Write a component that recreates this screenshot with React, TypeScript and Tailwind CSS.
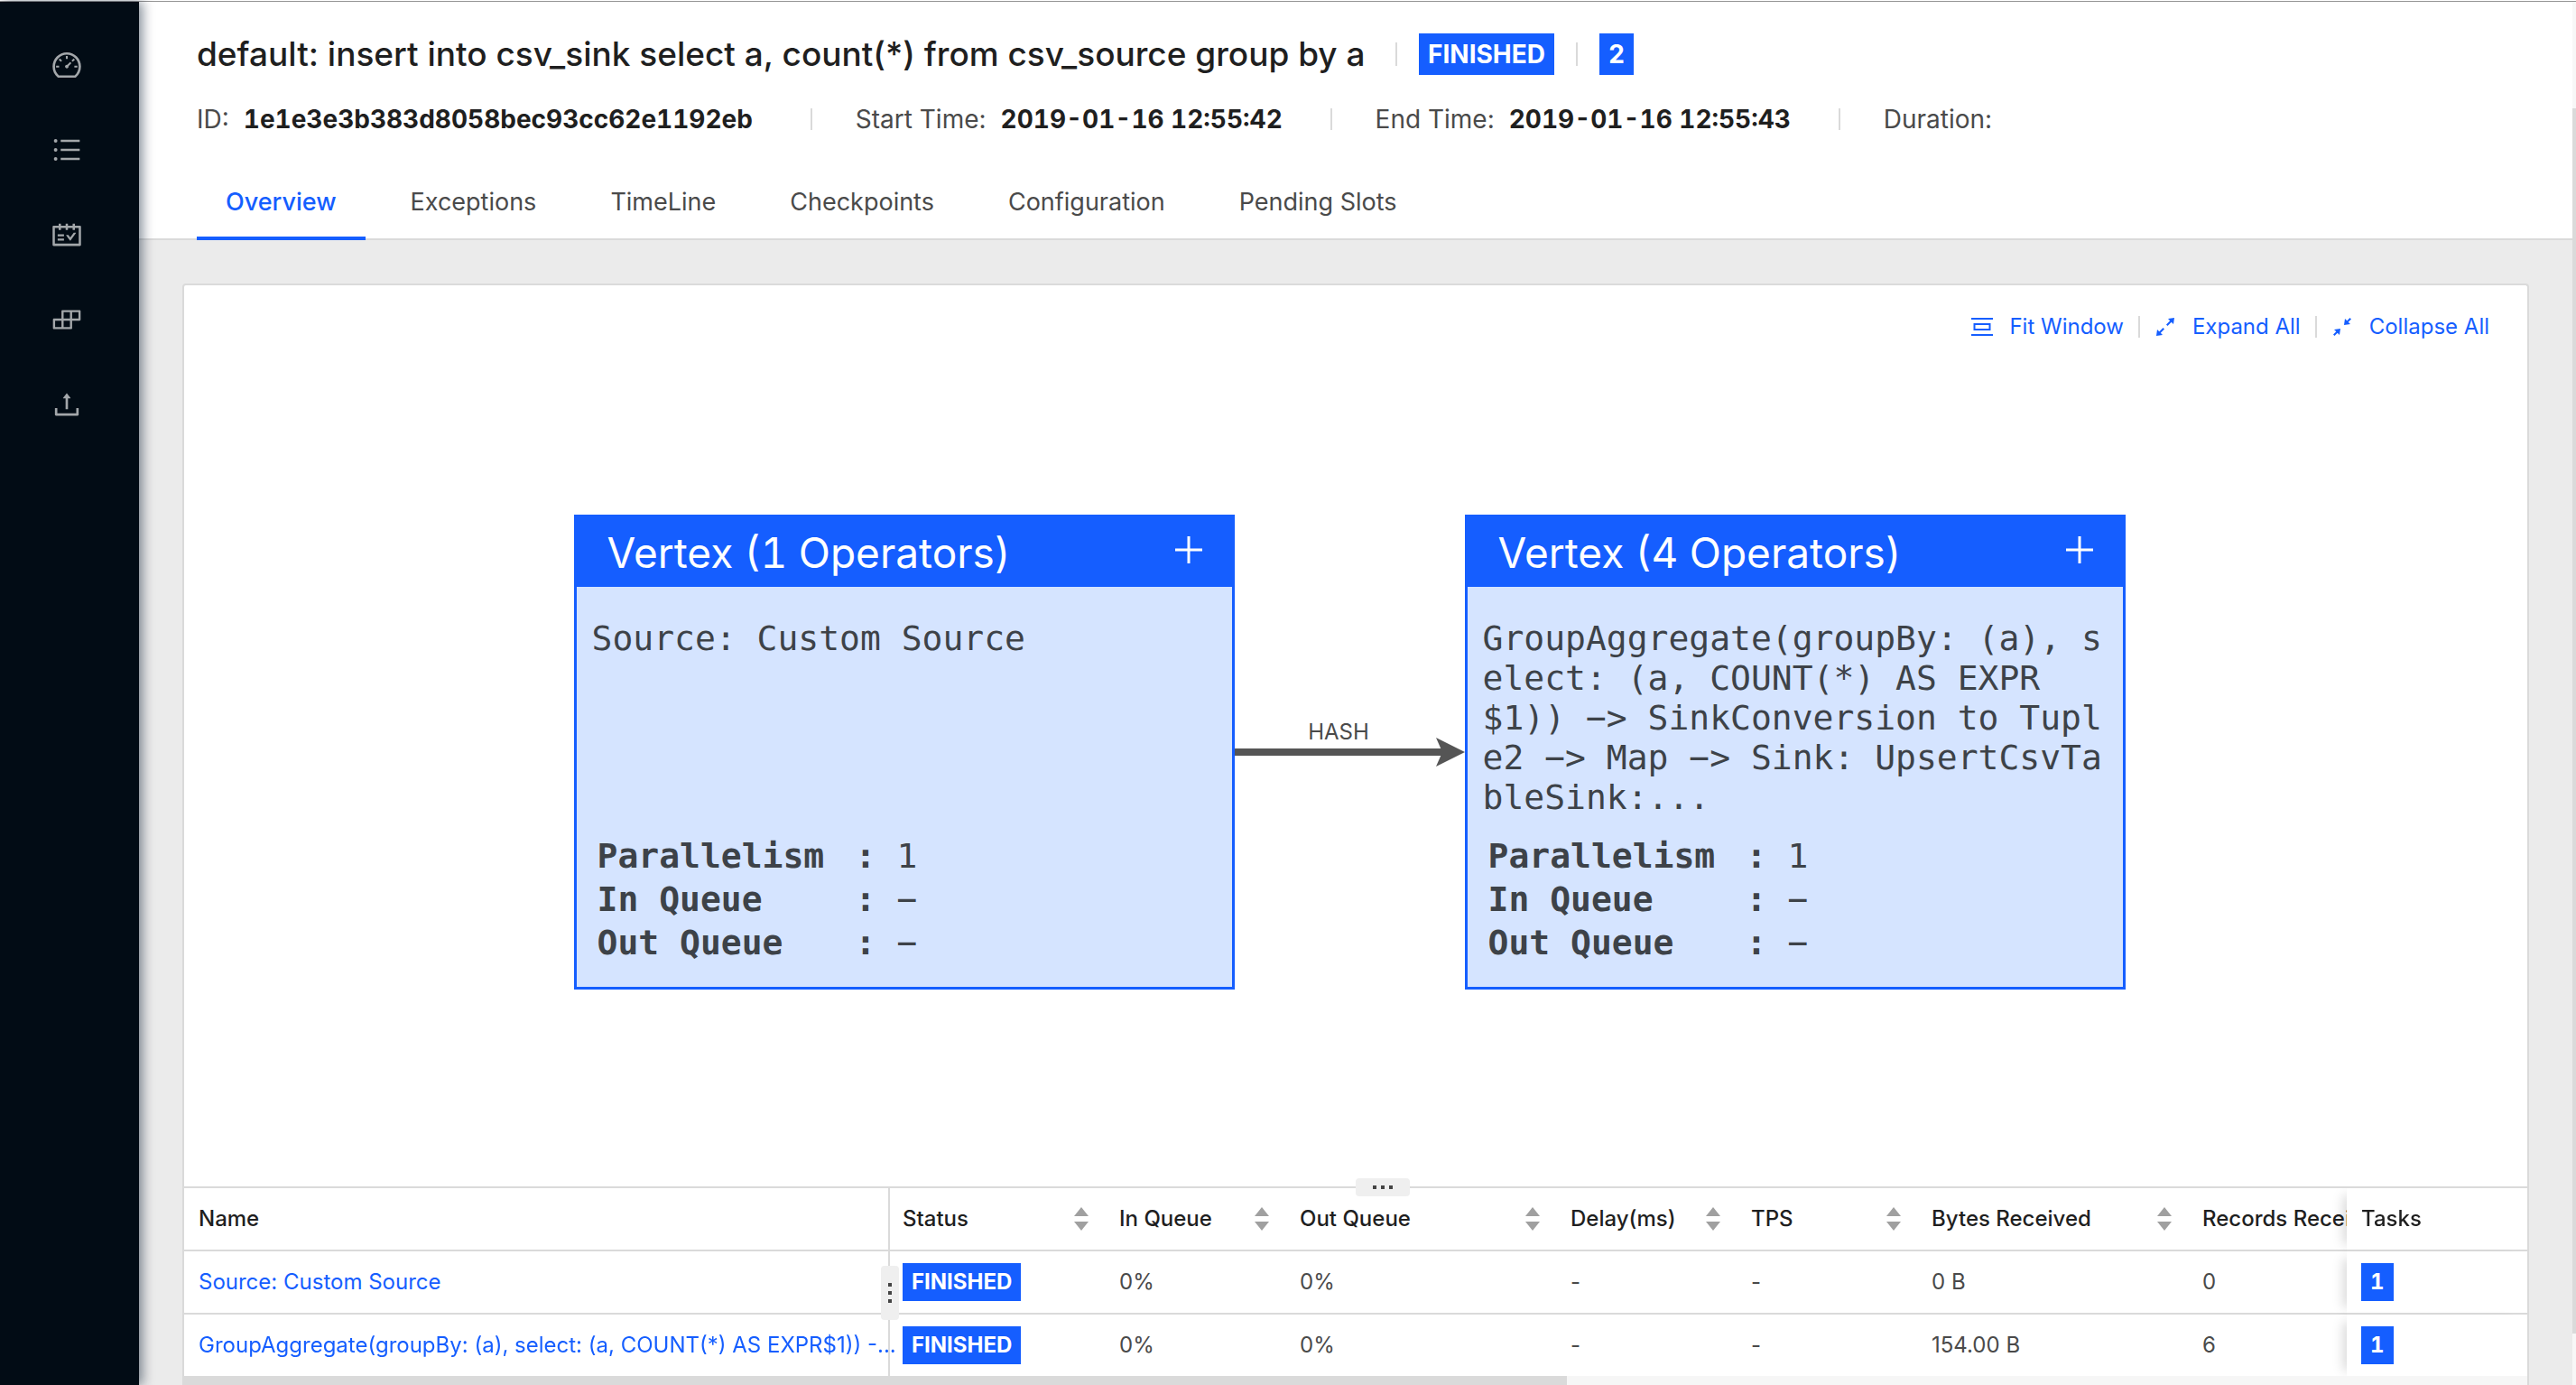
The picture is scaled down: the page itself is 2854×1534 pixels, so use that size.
import React from "react";
import {
  AiOutlineBuild,
  AiOutlineDashboard,
  AiOutlineSchedule,
  AiOutlineUnorderedList,
  AiOutlineUpload,
} from "react-icons/ai";

const menu = [
  { label: "Dashboard", Icon: AiOutlineDashboard },
  { label: "Jobs", Icon: AiOutlineUnorderedList },
  { label: "Task managers", Icon: AiOutlineSchedule },
  { label: "Job manager", Icon: AiOutlineBuild },
  { label: "Submit", Icon: AiOutlineUpload },
];

const tabs = ["Overview", "Exceptions", "TimeLine", "Checkpoints", "Configuration", "Pending Slots"];

const info = [
  { label: "ID:", value: "1e1e3e3b383d8058bec93cc62e1192eb", width: "min-w-[580px]" },
  { label: "Start Time:", value: "2019-01-16 12:55:42", width: "min-w-[317px]" },
  { label: "End Time:", value: "2019-01-16 12:55:43", width: "min-w-[317px]" },
  { label: "Duration:", value: "", width: "" },
];

const columns = ["Status", "In Queue", "Out Queue", "Delay(ms)", "TPS", "Bytes Received", "Records Received"];

const rows = [
  { name: "Source: Custom Source", cells: ["0%", "0%", "-", "-", "0 B", "0"], tasks: 1 },
  {
    name: "GroupAggregate(groupBy: (a), select: (a, COUNT(*) AS EXPR$1)) -...",
    cells: ["0%", "0%", "-", "-", "154.00 B", "6"],
    tasks: 1,
  },
];

const vertices = [
  { title: "Vertex (1 Operators)", lines: ["Source: Custom Source"] },
  {
    title: "Vertex (4 Operators)",
    lines: [
      "GroupAggregate(groupBy: (a), s",
      "elect: (a, COUNT(*) AS EXPR",
      "$1)) −> SinkConversion to Tupl",
      "e2 −> Map −> Sink: UpsertCsvTa",
      "bleSink:...",
    ],
  },
];

const stats = [
  ["Parallelism", "1"],
  ["In Queue", "−"],
  ["Out Queue", "−"],
];

function Vertex({ title, lines }: { title: string; lines: string[] }) {
  return (
    <article className="flex h-[526px] w-[732px] shrink-0 flex-col border-3 border-[#155eff] bg-[#d5e4ff] text-[#3d4248]">
      <header className="flex h-[77px] items-center justify-between bg-[#155eff] pr-8 pl-[34px] text-white">
        <h2 className="text-[46px] leading-[60px] tabular-nums">{title}</h2>
        <button type="button" aria-label="Expand vertex" className="pb-1.5">
          <svg className="size-8" viewBox="0 0 32 32" stroke="currentColor" strokeWidth="3">
            <path d="M16 1v30M1 16h30" />
          </svg>
        </button>
      </header>
      <div className="flex flex-1 flex-col justify-between pt-[35px] pr-2 pb-[25px] pl-[17px] font-['DejaVu_Sans_Mono',monospace] text-[38px]">
        <p className="leading-[44px]">
          {lines.map((line) => (
            <span key={line} className="block whitespace-pre">
              {line}
            </span>
          ))}
        </p>
        <dl className="grid grid-cols-[286px_46px_1fr] pl-1.5 leading-[48px]">
          {stats.map(([k, v]) => (
            <React.Fragment key={k}>
              <dt className="font-bold">{k}</dt>
              <dd className="font-bold">:</dd>
              <dd>{v}</dd>
            </React.Fragment>
          ))}
        </dl>
      </div>
    </article>
  );
}

function Tag({ children }: { children: React.ReactNode }) {
  return (
    <span className="inline-block h-[42px] bg-[#155eff] px-2.5 text-center text-[24px] leading-[42px] font-bold text-white tabular-nums">
      {children}
    </span>
  );
}

function HeaderTag({ children }: { children: React.ReactNode }) {
  return (
    <>
      <span className="mx-6 h-[26px] w-0.5 bg-[#dadada]" />
      <span className="h-[46px] bg-[#155eff] px-2.5 text-[28px] leading-[46px] font-bold text-white tabular-nums">
        {children}
      </span>
    </>
  );
}

function Sorter() {
  return (
    <svg className="h-[26px] w-4 text-[#a0a0a0]" viewBox="0 0 16 26" fill="currentColor">
      <path d="M8 0l8 10H0zM0 16h16L8 26z" />
    </svg>
  );
}

function FitIcon() {
  return (
    <svg className="size-6" viewBox="0 0 24 24" fill="none" stroke="currentColor" strokeWidth="2">
      <path d="M0 3h24M0 21h24M3.500 9h17v6h-17z" />
    </svg>
  );
}

function ExpandIcon() {
  return (
    <svg className="mx-0.5 size-5" viewBox="0 0 20 20" fill="currentColor">
      <path d="M20 0l-1 7-2.300-2.300-4.200 4.200-1.500-1.500 4.200-4.200L13 1zM0 20l1-7 2.300 2.300 4.200-4.200 1.500 1.500-4.200 4.200L7 19z" />
    </svg>
  );
}

function CollapseIcon() {
  return (
    <svg className="mx-0.5 size-5" viewBox="0 0 20 20" fill="currentColor">
      <path d="M12 8l1-7 2.300 2.300L18.500 0 20 1.500l-3.300 3.200L19 7zM8 12l-1 7-2.300-2.300L1.500 20 0 18.500l3.300-3.200L1 13z" />
    </svg>
  );
}

export default function App() {
  return (
    <div className="flex h-screen flex-col overflow-hidden bg-[#ebebeb] font-[Inter,sans-serif] text-[#4a4a4a]">
      <div className="h-0.5 shrink-0 border-b border-[#949494] bg-white" />
      <div className="flex min-h-0 flex-1">
        <nav className="relative z-10 flex w-[154px] shrink-0 flex-col items-center gap-[58px] bg-[#020c15] pt-[52px] pr-1.5 text-[#a3a7aa] shadow-[4px_0_12px_rgba(0,21,41,0.48)]">
          {menu.map(({ label, Icon }) => (
            <a key={label} href="#" aria-label={label}>
              <Icon className="size-9" />
            </a>
          ))}
        </nav>
        <div className="flex min-w-0 flex-1 flex-col">
          <header className="shrink-0 border-b-2 border-[#dadada] bg-white pl-16">
            <div className="flex h-[92px] items-center pt-6">
              <h1 className="min-w-[1304px] text-[37px] leading-[48px] font-medium whitespace-nowrap text-[#1f1f1f]">
                default: insert into csv_sink select a, count(*) from csv_source group by a
              </h1>
              <HeaderTag>FINISHED</HeaderTag>
              <HeaderTag>2</HeaderTag>
            </div>
            <dl className="flex items-center pt-4 text-[28px] leading-[44px] whitespace-nowrap">
              {info.map(({ label, value, width }, i) => (
                <div key={label} className="flex items-center">
                  {i > 0 && <span className="mx-12 h-6 w-0.5 bg-[#dadada]" />}
                  <dt className="mr-4">{label}</dt>
                  <dd className={`font-bold text-[#1f1f1f] tabular-nums ${width}`}>{value}</dd>
                </div>
              ))}
            </dl>
            <div role="tablist" className="-mb-0.5 flex gap-[18px] pt-8 text-[27px]">
              {tabs.map((tab, i) => (
                <button
                  key={tab}
                  type="button"
                  role="tab"
                  aria-selected={i === 0}
                  className={
                    i === 0
                      ? "h-20 border-b-4 border-[#155eff] px-8 font-medium text-[#155eff]"
                      : "h-20 border-b-4 border-transparent px-8"
                  }
                >
                  {tab}
                </button>
              ))}
            </div>
          </header>
          <main className="flex min-h-0 flex-1 flex-col px-12 pt-12">
            <section className="flex min-h-0 flex-1 flex-col rounded-t border-2 border-b-0 border-[#dadada] bg-white">
              <div className="relative flex flex-1 items-center justify-center pt-9 pr-3.5">
                <div className="absolute top-7 right-[42px] flex items-center text-[24px] leading-9 text-[#155eff]">
                  <button type="button" className="flex items-center gap-[18px]">
                    <FitIcon />
                    Fit Window
                  </button>
                  <span className="mx-4 h-6 w-0.5 bg-[#dadada]" />
                  <button type="button" className="flex items-center gap-[18px]">
                    <ExpandIcon />
                    Expand All
                  </button>
                  <span className="mx-4 h-6 w-0.5 bg-[#dadada]" />
                  <button type="button" className="flex items-center gap-[18px]">
                    <CollapseIcon />
                    Collapse All
                  </button>
                </div>
                <Vertex {...vertices[0]} />
                <div className="flex w-[255px] shrink-0 flex-col items-center pb-4 text-[24px]">
                  <span className="-mb-1 pr-6 leading-5">HASH</span>
                  <svg className="h-8 w-full" viewBox="0 0 255 32" fill="#555">
                    <path d="M0 12h230v8H0zM223 0l32 16-32 16 7-16z" />
                  </svg>
                </div>
                <Vertex {...vertices[1]} />
                <button
                  type="button"
                  aria-label="Resize table height"
                  className="absolute -bottom-[11px] left-1/2 z-20 flex h-5 w-[60px] items-center justify-center rounded bg-[#efefef]"
                >
                  <svg className="h-1 w-[22px]" viewBox="0 0 22 4" fill="#444">
                    <path d="M0 0h4v4H0zM9 0h4v4H9zM18 0h4v4h-4z" />
                  </svg>
                </button>
              </div>
              <div className="relative shrink-0 border-t-2 border-[#dadada]">
                <div className="overflow-hidden">
                  <table className="w-[2720px] min-w-full table-fixed border-separate border-spacing-0 text-left text-[24px]">
                    <colgroup>
                      <col className="w-[780px]" />
                      <col className="w-[240px]" />
                      <col className="w-[200px]" />
                      <col className="w-[300px]" />
                      <col className="w-[200px]" />
                      <col className="w-[200px]" />
                      <col className="w-[300px]" />
                      <col className="w-[300px]" />
                      <col className="w-[200px]" />
                    </colgroup>
                    <thead className="text-[#1f1f1f]">
                      <tr className="h-[70px]">
                        <th className="sticky left-0 z-10 border-b-2 border-[#dadada] bg-white p-0 pl-4 font-medium">Name</th>
                        {columns.map((c, i) => (
                          <th
                            key={c}
                            className={
                              i === 0
                                ? "border-b-2 border-l-2 border-[#dadada] p-0 pl-3.5 font-medium"
                                : "border-b-2 border-[#dadada] p-0 pl-4 font-medium"
                            }
                          >
                            <div className="flex items-center justify-between pr-[18px] whitespace-nowrap">
                              {c}
                              <Sorter />
                            </div>
                          </th>
                        ))}
                        <th className="sticky right-0 border-b-2 border-[#dadada] bg-white p-0 pl-4 font-medium shadow-[-12px_0_12px_-8px_rgba(0,0,0,0.15)]">
                          Tasks
                        </th>
                      </tr>
                    </thead>
                    <tbody>
                      {rows.map((r) => (
                        <tr key={r.name} className="h-[70px]">
                          <td className="sticky left-0 z-10 border-b-2 border-[#dadada] bg-white p-0 pl-4 whitespace-nowrap">
                            <a href="#" className="text-[#155eff]">
                              {r.name}
                            </a>
                          </td>
                          <td className="border-b-2 border-l-2 border-[#dadada] p-0 pl-3.5">
                            <Tag>FINISHED</Tag>
                          </td>
                          {r.cells.map((c, i) => (
                            <td key={i} className="border-b-2 border-[#dadada] p-0 pl-4">
                              {c}
                            </td>
                          ))}
                          <td className="sticky right-0 border-b-2 border-[#dadada] bg-white p-0 pl-4 shadow-[-12px_0_12px_-8px_rgba(0,0,0,0.15)]">
                            <Tag>{r.tasks}</Tag>
                          </td>
                        </tr>
                      ))}
                    </tbody>
                  </table>
                </div>
                <div className="relative z-10 -mt-0.5 h-2.5 bg-[#f6f6f6]">
                  <div className="h-full w-[59%] bg-[#dadada]" />
                </div>
                <button
                  type="button"
                  aria-label="Resize name column"
                  className="absolute top-[86px] left-[772px] z-20 flex h-[60px] w-5 items-center justify-center rounded bg-[#efefef]"
                >
                  <svg className="h-[22px] w-1" viewBox="0 0 4 22" fill="#444">
                    <path d="M0 0h4v4H0zM0 9h4v4H0zM0 18h4v4H0z" />
                  </svg>
                </button>
              </div>
            </section>
          </main>
        </div>
        <div className="w-1 shrink-0 bg-[#f7f7f7] pt-[118px]">
          <div className="h-[96%] bg-[#dadada]" />
        </div>
      </div>
    </div>
  );
}
